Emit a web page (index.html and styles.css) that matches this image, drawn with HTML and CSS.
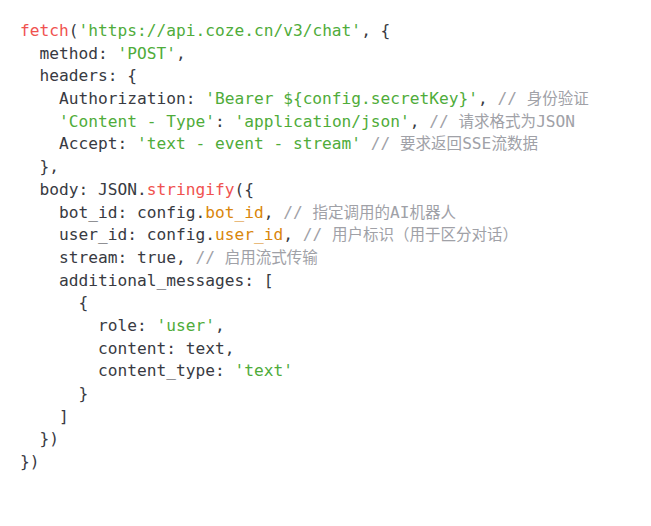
FILE: index.html
```html
<!DOCTYPE html>
<html lang="zh-CN">
<head>
<meta charset="utf-8">
<link rel="stylesheet" href="styles.css">
</head>
<body>
<pre class="code"><span class="fn">fetch</span>(<span class="str">'https://api.coze.cn/v3/chat'</span>, {
  method: <span class="str">'POST'</span>,
  headers: {
    Authorization: <span class="str">'Bearer ${config.secretKey}'</span>, <span class="cm">// <span class="zh">身份验证</span></span>
    <span class="str">'Content - Type'</span>: <span class="str">'application/json'</span>, <span class="cm">// <span class="zh">请求格式为</span>JSON</span>
    Accept: <span class="str">'text - event - stream'</span> <span class="cm">// <span class="zh">要求返回</span>SSE<span class="zh">流数据</span></span>
  },
  body: JSON.<span class="fn">stringify</span>({
    bot_id: config.<span class="prop">bot_id</span>, <span class="cm">// <span class="zh">指定调用的</span>AI<span class="zh">机器人</span></span>
    user_id: config.<span class="prop">user_id</span>, <span class="cm">// <span class="zh">用户标识（用于区分对话）</span></span>
    stream: true, <span class="cm">// <span class="zh">启用流式传输</span></span>
    additional_messages: [
      {
        role: <span class="str">'user'</span>,
        content: text,
        content_type: <span class="str">'text'</span>
      }
    ]
  })
})</pre>
</body>
</html>
```
FILE: styles.css
```css
html, body {
  margin: 0;
  background: #ffffff;
}
body {
  padding: 20px 20px;
}
.code {
  margin: 0;
  font-family: "DejaVu Sans Mono", "Liberation Mono", "Noto Sans CJK SC", monospace;
  font-size: 16.2px;
  line-height: 22.68px;
  color: #383a42;
  white-space: pre;
}
.fn { color: #f0524f; }
.str { color: #4fac3a; }
.prop { color: #d9860b; }
.cm { color: #a0a1a7; }
.zh {
  font-family: "Noto Sans CJK SC", sans-serif;
  font-size: 15.5px;
  line-height: 1;
}
```
